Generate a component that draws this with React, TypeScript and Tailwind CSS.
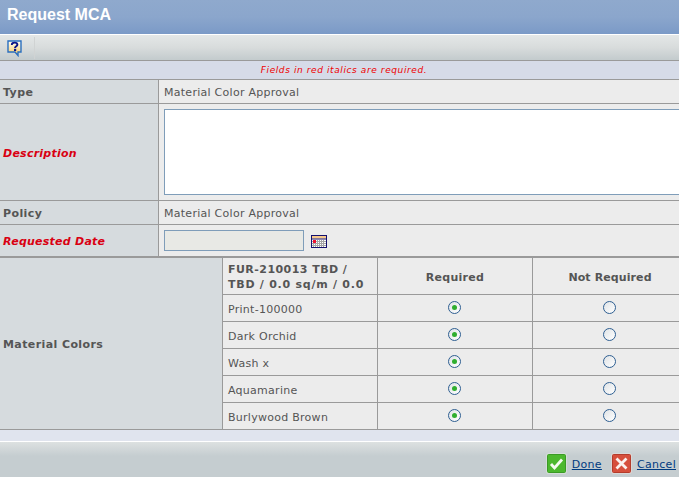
const font = "[font-family:'DejaVu_Sans',Verdana,sans-serif]";

function HelpIcon() {
  return (
    <svg width="16" height="17" viewBox="0 0 16 17" className="block">
      <defs>
        <linearGradient id="hb" x1="0" y1="0" x2="0" y2="1">
          <stop offset="0" stopColor="#fdfdf8" />
          <stop offset="1" stopColor="#fcc95a" />
        </linearGradient>
      </defs>
      <path d="M1 1H14V12H11V15.5L8 12H1Z" fill="url(#hb)" stroke="#2a6fc0" strokeWidth="1.4" />
      <path d="M4.8 5C4.8 3.2 6 2.6 7.6 2.6C9.3 2.6 10.4 3.4 10.4 4.7C10.4 6.3 8 6.2 8 8" fill="none" stroke="#0a1488" strokeWidth="1.9" />
      <rect x="7" y="8.8" width="2.2" height="2.2" fill="#0a1488" />
    </svg>
  );
}

function CalIcon() {
  return (
    <svg width="16" height="13" viewBox="0 0 16 13" className="block">
      <rect x="0.5" y="0.5" width="15" height="12" fill="#fff" stroke="#14106e" />
      <rect x="1" y="1" width="14" height="2.5" fill="#f8c98c" />
      <rect x="1" y="3.5" width="14" height="1" fill="#14106e" />
      <path d="M2.5 5V12M4.5 5V12M6.5 5V12M8.5 5V12M10.5 5V12M12.5 5V12" stroke="#a5a5a5" />
      <path d="M1 6.5H15M1 8.5H15M1 10.5H15" stroke="#a5a5a5" />
      <rect x="2" y="5" width="3" height="3" fill="#f01030" />
    </svg>
  );
}

function DoneIcon() {
  return (
    <svg width="21" height="21" viewBox="0 0 21 21" className="block">
      <rect x="0.5" y="0.5" width="20" height="20" rx="1.5" fill="#e4eee0" />
      <rect x="1.5" y="1.5" width="18" height="18" rx="1" fill="#4cb82e" stroke="#3b9a26" />
      <path d="M5 11L8.5 15L16 6.5" fill="none" stroke="#f4fbf0" strokeWidth="2.8" />
    </svg>
  );
}

function CancelIcon() {
  return (
    <svg width="21" height="21" viewBox="0 0 21 21" className="block">
      <rect x="0.5" y="0.5" width="20" height="20" rx="1.5" fill="#eee2de" />
      <rect x="1.5" y="1.5" width="18" height="18" rx="1" fill="#d64f3c" stroke="#b43c2c" />
      <path d="M5.5 5.5L15.5 15.5M15.5 5.5L5.5 15.5" fill="none" stroke="#fbf1ee" strokeWidth="2.8" />
    </svg>
  );
}

function Radio({ checked }: { checked?: boolean }) {
  return (
    <span className="flex h-[13px] w-[13px] items-center justify-center rounded-full border border-[#2f5f92] bg-gradient-to-br from-[#dfe3e6] to-[#ffffff]">
      {checked && <span className="h-[5px] w-[5px] rounded-full bg-[#2fae2f]" />}
    </span>
  );
}

const label = "flex items-center bg-[#d6dbde] pl-[3px] pt-[4px] text-[11px] font-bold tracking-[0.4px] text-[#555555]";
const reqLabel = "flex items-center bg-[#d6dbde] pl-[3px] pt-[4px] text-[11px] font-bold italic tracking-[0.25px] text-[#d90012]";
const val = "flex items-center border-l border-[#9a9a9a] bg-[#ececec] pl-[5px] text-[11px] tracking-[0.27px] text-[#555555]";
const th = "flex items-center justify-center bg-[#ececec] pt-[4px] text-[11px] font-bold tracking-[0.3px] text-[#555555]";

const rows = ["Print-100000", "Dark Orchid", "Wash x", "Aquamarine", "Burlywood Brown"];

export default function App() {
  return (
    <div className={`${font} flex h-[477px] w-[679px] flex-col overflow-hidden bg-[#e0e4ee]`}>
      <div className="flex h-[34px] shrink-0 items-center bg-gradient-to-b from-[#8fa9cd] via-[#8ba6cc] to-[#7b9ac7] pl-[7px] pb-[5px] font-['Liberation_Sans',sans-serif] text-[16px] font-bold text-white">
        Request MCA
      </div>
      <div className="h-px shrink-0 bg-white" />
      <div className="flex h-[25px] shrink-0 items-center bg-gradient-to-b from-[#e4e7e7] via-[#d8dcdc] to-[#c3cbcd]">
        <div className="ml-[7px] mt-[2px]"><HelpIcon /></div>
        <div className="ml-[11px] h-[22px] w-px bg-[#d0d3d3]" />
      </div>
      <div className="flex h-[20px] shrink-0 items-center justify-center border-y border-[#9a9a9a] bg-[#d6dbe8] pl-[9px] pt-px text-[9px] italic tracking-[0.6px] text-[#ee0000]">
        Fields in red italics are required.
      </div>
      <div className="grid shrink-0 grid-cols-[158px_521px] grid-rows-[23px_96px_23px_31px] gap-y-px bg-[#9a9a9a]">
        <div className={label}>Type</div>
        <div className={`${val} pt-[4px]`}>Material Color Approval</div>
        <div className={reqLabel}>Description</div>
        <div className={`${val} overflow-hidden`}>
          <div className="h-[86px] w-[530px] shrink-0 border border-[#7f9db9] bg-white" />
        </div>
        <div className={label}>Policy</div>
        <div className={`${val} pt-[4px]`}>Material Color Approval</div>
        <div className={reqLabel}>Requested Date</div>
        <div className={val}>
          <div className="h-[21px] w-[140px] border border-[#7f9db9] bg-[#e8e9e5]" />
          <div className="ml-[7px] mt-[2px]"><CalIcon /></div>
        </div>
      </div>
      <div className="grid shrink-0 grid-cols-[222px_154px_154px_154px] gap-px border-t-2 border-b border-[#9a9a9a] bg-[#9a9a9a] [grid-template-rows:36px_repeat(5,26px)]">
        <div className={`${label} row-span-6`}>Material Colors</div>
        <div className="flex items-center bg-[#ececec] pl-[5px] pt-[1px] text-[11px] font-bold leading-[15px] tracking-[0.45px] text-[#555555]">
          <span>FUR-210013 TBD /<br /><span className="tracking-[0.75px]">TBD / 0.0 sq/m / 0.0</span></span>
        </div>
        <div className={th}>Required</div>
        <div className={th}><span className="tracking-[0.1px]">Not Required</span></div>
        {rows.map((r) => [
          <div key={r} className="flex items-center bg-[#ececec] pl-[5px] pt-[4px] text-[11px] tracking-[0.27px] text-[#555555]">{r}</div>,
          <div key={r + "a"} className="flex items-center justify-center bg-[#ececec] pr-px pb-[1px]"><Radio checked /></div>,
          <div key={r + "b"} className="flex items-center justify-center bg-[#ececec] pr-px pb-[1px]"><Radio /></div>,
        ])}
      </div>
      <div className="h-[11px] shrink-0 bg-[#e0e4ee]" />
      <div className="h-px shrink-0 bg-white" />
      <div className="flex min-h-0 flex-1 items-center justify-end bg-gradient-to-b from-[#dde1e1] via-[#c5cdd0] via-40% to-[#c5cdd0] pt-[8px] pr-[3px] text-[11px] tracking-[0.3px]">
        <DoneIcon />
        <a className="ml-[5px] pt-[3px] text-[#003b80] underline">Done</a>
        <div className="ml-[9px]"><CancelIcon /></div>
        <a className="ml-[5px] pt-[3px] text-[#003b80] underline">Cancel</a>
      </div>
    </div>
  );
}
